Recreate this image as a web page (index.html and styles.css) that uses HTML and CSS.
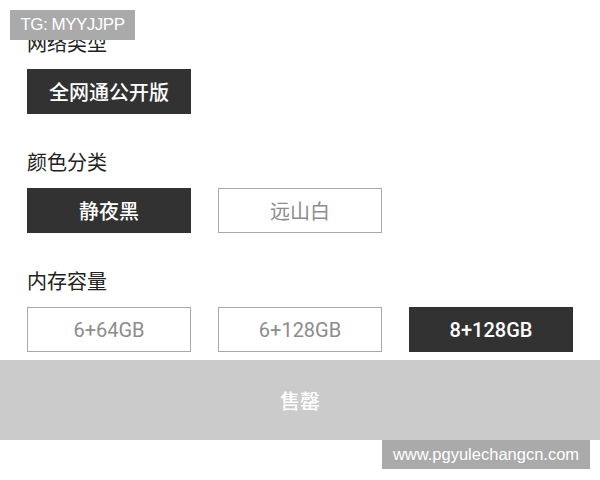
FILE: index.html
```html
<!DOCTYPE html>
<html lang="zh-CN">
<head>
<meta charset="utf-8">
<link rel="stylesheet" href="styles.css">
</head>
<body>
<div class="page">
  <div class="content">
    <section class="group">
      <div class="label">网络类型</div>
      <div class="options">
        <div class="opt active">全网通公开版</div>
      </div>
    </section>
    <section class="group">
      <div class="label">颜色分类</div>
      <div class="options">
        <div class="opt active">静夜黑</div>
        <div class="opt">远山白</div>
      </div>
    </section>
    <section class="group">
      <div class="label">内存容量</div>
      <div class="options">
        <div class="opt num">6+64GB</div>
        <div class="opt num">6+128GB</div>
        <div class="opt num active">8+128GB</div>
      </div>
    </section>
  </div>
  <div class="soldout">售罄</div>
  <div class="badge tg">TG: MYYJJPP</div>
  <div class="badge site">www.pgyulechangcn.com</div>
</div>
</body>
</html>
```
FILE: styles.css
```css
html, body {
  margin: 0;
  padding: 0;
  background: #fff;
}
.page {
  position: relative;
  width: 600px;
  height: 480px;
  overflow: hidden;
  font-family: "Noto Sans CJK SC", "Noto Sans", sans-serif;
}
.content {
  padding: 31px 27px 0 27px;
  display: flex;
  flex-direction: column;
  gap: 36px;
}
.label {
  font-size: 20px;
  line-height: 24px;
  color: #222;
  margin-bottom: 14px;
}
.options {
  display: grid;
  grid-template-columns: repeat(3, 164px);
  column-gap: 27px;
}
.opt {
  box-sizing: border-box;
  height: 45px;
  border: 1.5px solid #a8a8a8;
  color: #8c8c8c;
  font-size: 20px;
  display: flex;
  align-items: center;
  justify-content: center;
  background: #fff;
}
.opt.num {
  font-family: Roboto, "Noto Sans CJK SC", sans-serif;
}
.opt.active {
  background: #323232;
  border-color: #323232;
  color: #fff;
  font-weight: 500;
}
.soldout {
  margin-top: 8px;
  height: 80px;
  background: #cbcbcb;
  color: #fff;
  font-size: 20px;
  font-weight: 500;
  display: flex;
  align-items: center;
  justify-content: center;
}
.badge {
  position: absolute;
  background: #aaaaaa;
  color: #fff;
  font-family: "Liberation Sans", Arial, sans-serif;
  display: flex;
  align-items: center;
  justify-content: center;
}
.tg {
  left: 10px;
  top: 10px;
  width: 125px;
  height: 30px;
  font-size: 17px;
  letter-spacing: -0.5px;
}
.site {
  left: 382px;
  top: 440px;
  width: 208px;
  height: 29px;
  font-size: 16.5px;
}
```
